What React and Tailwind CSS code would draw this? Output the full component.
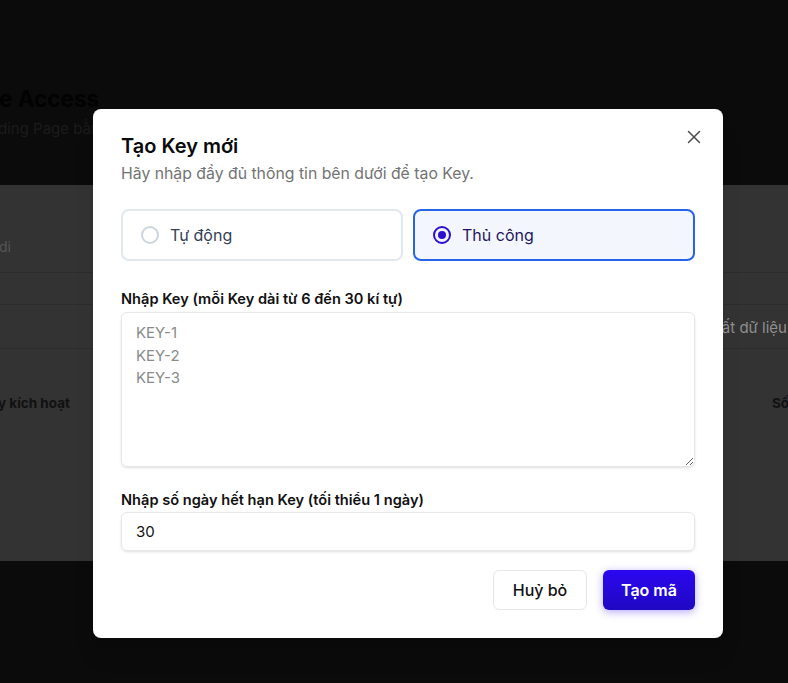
import React, { useState } from 'react';
import { X } from 'lucide-react';

const font = { fontFamily: 'Inter, "Noto Sans", sans-serif' };

const ModeOption = ({ label, active, onClick }) => (
  <button
    type="button"
    onClick={onClick}
    className={`flex h-[52px] flex-1 items-center gap-[11px] rounded-lg border-2 px-[18px] text-left ${
      active ? 'border-[#2563eb] bg-[#f4f6fe]' : 'border-[#e2e8f0] bg-white'
    }`}
  >
    {active ? (
      <span className="flex h-[18px] w-[18px] items-center justify-center rounded-full border-2 border-[#2a10cf]">
        <span className="h-[8px] w-[8px] rounded-full bg-[#2a10cf]" />
      </span>
    ) : (
      <span className="h-[18px] w-[18px] rounded-full border-2 border-[#cbd5e1]" />
    )}
    <span className={`text-[16px] ${active ? 'text-[#1e1760]' : 'text-[#334155]'}`}>{label}</span>
  </button>
);

const App = () => {
  const [mode, setMode] = useState('manual');

  return (
    <div className="relative min-h-screen overflow-hidden bg-[#0b0b0b]" style={font}>
      {/* Page behind the dialog */}
      <div className="h-[185px] pt-[85px]">
        <h1 className="-ml-[1px] text-[22.5px] font-bold leading-[28px] text-[#020202]">e Access</h1>
        <p className="-ml-[2px] mt-[5px] text-[15px] leading-[22px] text-[#1b1b1b]">ding Page bằng Key</p>
      </div>
      <div className="h-[376px] bg-[#333333]">
        <div className="flex h-[87px] items-end pb-[15px] text-[14px] text-[#555555]">
          <span className="-ml-[1px]">di</span>
        </div>
        <div className="h-[32px] border-t border-[#2c2c2c]" />
        <div className="flex h-[44px] items-center justify-end border-t border-[#2c2c2c] pt-[3px] text-[15px] text-[#8f8f8f]">
          <span className="mr-[1px]">ất dữ liệu</span>
        </div>
        <div className="flex justify-between border-t border-[#2c2c2c] pt-[44px] text-[13.5px] font-bold text-[#111111]">
          <span className="-ml-[2px]">y kích hoạt</span>
          <span className="-mr-[1px]">Số</span>
        </div>
      </div>

      {/* Create key dialog */}
      <div className="absolute inset-0 flex items-start pl-[93px] pt-[109px]">
        <div className="relative w-[630px] rounded-lg bg-white px-[28px] pb-[28px] pt-[23px] shadow-xl">
          <button type="button" className="absolute right-[18px] top-[17px] text-[#4b4b4b]">
            <X size={22} strokeWidth={1.6} />
          </button>

          <h2 className="text-[20px] font-semibold leading-[28px] text-[#0a0a0a]">Tạo Key mới</h2>
          <p className="mt-[3px] text-[15.8px] leading-[22px] text-[#737373]">
            Hãy nhập đầy đủ thông tin bên dưới để tạo Key.
          </p>

          <div className="mt-[24px] flex gap-[10px]">
            <ModeOption label="Tự động" active={mode === 'auto'} onClick={() => setMode('auto')} />
            <ModeOption label="Thủ công" active={mode === 'manual'} onClick={() => setMode('manual')} />
          </div>

          <label className="mt-[28px] block text-[14.6px] font-semibold leading-[20px] text-[#111111]">
            Nhập Key (mỗi Key dài từ 6 đến 30 kí tự)
          </label>
          <textarea
            rows={6}
            placeholder={'KEY-1\nKEY-2\nKEY-3'}
            className="mt-[3px] block h-[155px] w-full rounded-md border border-[#e5e7eb] px-[14px] pb-[10px] pt-[9px] text-[15px] leading-[22.5px] text-[#111111] shadow-sm outline-none placeholder:text-[#8a8a8a]"
          />

          <label className="mt-[23px] block text-[14.6px] font-semibold leading-[20px] text-[#111111]">
            Nhập số ngày hết hạn Key (tối thiểu 1 ngày)
          </label>
          <input
            type="text"
            defaultValue="30"
            className="mt-[2px] block h-[39px] w-full rounded-md border border-[#e5e7eb] px-[14px] text-[15px] text-[#111111] shadow-sm outline-none"
          />

          <div className="mt-[19px] flex justify-end gap-4">
            <button
              type="button"
              className="h-[40px] w-[94px] rounded-md border border-[#e5e7eb] bg-white text-[16px] font-medium text-[#111111]"
            >
              Huỷ bỏ
            </button>
            <button
              type="button"
              className="h-[40px] w-[92px] rounded-md bg-linear-to-b from-[#2c07f0] to-[#1f08c2] text-[16px] font-semibold text-white shadow-[0_2px_8px_rgba(43,7,238,0.35)]"
            >
              Tạo mã
            </button>
          </div>
        </div>
      </div>
    </div>
  );
};

export default App;
